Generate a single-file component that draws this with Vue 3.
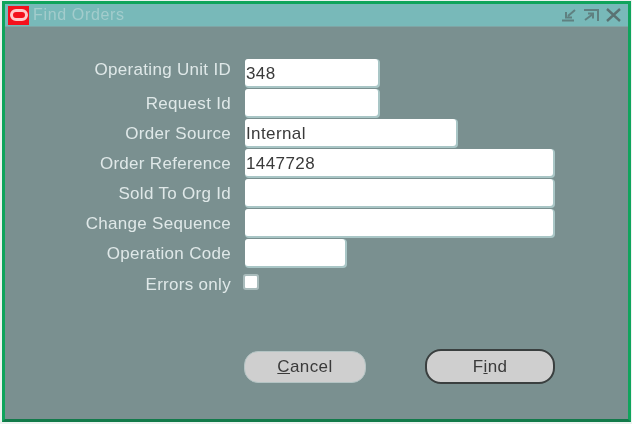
<template>
  <div class="window">
    <header class="titlebar">
      <span class="logo"><span class="ring"></span></span>
      <span class="title">Find Orders</span>
      <span class="controls">
        <svg width="14" height="14" viewBox="0 0 14 14">
          <path d="M0 12.500h12M13 2L6 8M4 4v5.500h6" fill="none" stroke="#5f8080" stroke-width="2" />
        </svg>
        <svg width="16" height="14" viewBox="0 0 16 14">
          <path d="M1 2h14v11M2 12L10 6M5 5.500h5v5" fill="none" stroke="#5f8080" stroke-width="2" />
        </svg>
        <svg width="15" height="14" viewBox="0 0 15 14">
          <path d="M1 1l13 12M14 1L1 13" fill="none" stroke="#5a7272" stroke-width="2.400" />
        </svg>
      </span>
    </header>

    <div class="body">
      <form class="fields" @submit.prevent>
        <template v-for="f in fields" :key="f.label">
          <label class="label">{{ f.label }}</label>
          <div class="input" :class="f.size">{{ f.value }}</div>
        </template>
        <label class="label check-label">Errors only</label>
        <div class="check"></div>
      </form>

      <div class="actions">
        <button class="btn cancel" type="button"><u>C</u>ancel</button>
        <button class="btn find" type="button">F<u>i</u>nd</button>
      </div>
    </div>
  </div>
</template>

<script setup>
const fields = [
  { label: "Operating Unit ID", value: "348", size: "small" },
  { label: "Request Id", value: "", size: "small" },
  { label: "Order Source", value: "Internal", size: "medium" },
  { label: "Order Reference", value: "1447728", size: "large" },
  { label: "Sold To Org Id", value: "", size: "large" },
  { label: "Change Sequence", value: "", size: "large" },
  { label: "Operation Code", value: "", size: "tiny" },
];
</script>

<style>
html,
body {
  margin: 0;
  background: #eef2f0;
}
</style>

<style scoped>
.window {
  box-sizing: border-box;
  width: 629px;
  height: 421px;
  margin: 1px 0 0 2px;
  border: 3px solid #0fa45c;
  border-bottom-color: #127a4a;
  background: #7a9090;
  font-family: "Liberation Sans", Arial, sans-serif;
  overflow: hidden;
  filter: blur(0.4px);
}

.titlebar {
  display: flex;
  align-items: center;
  height: 23px;
  background: #78b9b9;
  border-bottom: 1px solid #7fa5a5;
  box-sizing: border-box;
}
.logo {
  display: flex;
  align-items: center;
  justify-content: center;
  width: 21px;
  height: 19px;
  margin-left: 3px;
  background: #f4101c;
}
.ring {
  box-sizing: border-box;
  width: 18px;
  height: 12px;
  border: 3px solid #ffc9c9;
  border-radius: 6px;
}
.title {
  margin-left: 4px;
  font-size: 16px;
  letter-spacing: 0.65px;
  color: #a3cccc;
}
.controls {
  margin-left: auto;
  margin-right: 7px;
  display: flex;
  align-items: center;
  gap: 7px;
}

.body {
  padding-top: 32px;
}

.fields {
  display: grid;
  grid-template-columns: 226px 1fr;
  column-gap: 14px;
  row-gap: 3px;
  align-items: center;
}
.label {
  padding-top: 2px;
  text-align: right;
  font-size: 17px;
  letter-spacing: 0.3px;
  color: #dfe8e8;
}
.label:first-child {
  padding: 0 0 5px;
}
.input {
  box-sizing: border-box;
  height: 27px;
  padding: 3px 0 0 1px;
  line-height: 24px;
  font-size: 17px;
  letter-spacing: 0.4px;
  color: #3a3a3a;
  background: #fff;
  border-radius: 3px;
  box-shadow: 1px 1px 0 1px #a9c6c6;
}
.small {
  width: 133px;
}
.medium {
  width: 211px;
}
.large {
  width: 308px;
}
.tiny {
  width: 100px;
}
.check-label {
  margin-top: 2px;
  padding-top: 0;
  line-height: 27px;
}
.check {
  width: 12px;
  height: 12px;
  margin-top: -4px;
  background: #fff;
  border-radius: 1px;
  box-shadow: 0 0 0 2px #a9bcbc;
}

.actions {
  display: flex;
  align-items: center;
  margin: 51px 0 0 239px;
  gap: 59px;
}
.btn {
  font-family: inherit;
  font-size: 17px;
  letter-spacing: 0.4px;
  color: #3a3a3a;
  background: #cfcfcf;
  padding: 0;
}
.cancel {
  width: 122px;
  height: 32px;
  border: 1px solid #b4c4c4;
  border-radius: 14px;
}
.find {
  width: 130px;
  height: 35px;
  border: 2px solid #3a3f3f;
  border-radius: 16px;
}
</style>
